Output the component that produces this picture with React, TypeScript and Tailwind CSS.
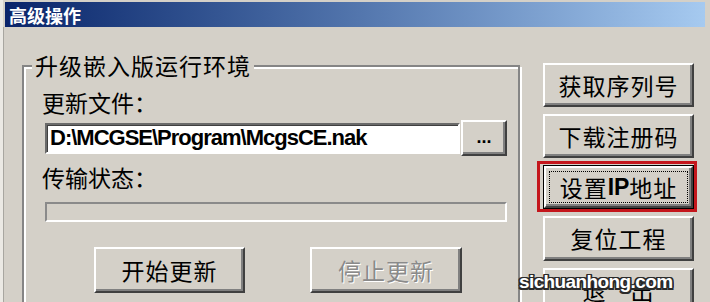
import React from "react";

const raised =
  "border-2 border-t-white border-l-white border-r-[#404040] border-b-[#404040] shadow-[inset_-2px_-2px_0_#808080] bg-[#d4d0c8]";

function Btn({
  children,
  className = "",
  disabled = false,
}: {
  children: React.ReactNode;
  className?: string;
  disabled?: boolean;
}) {
  return (
    <div
      className={`${raised} flex items-center justify-center text-[23px] leading-none tracking-[1px] ${
        disabled ? "text-[#8a8a8a] [text-shadow:1px_1px_0_#ffffff]" : "text-black"
      } ${className}`}
    >
      {children}
    </div>
  );
}

export default function App() {
  return (
    <div className="relative h-[302px] w-[710px] overflow-hidden bg-[#d4d0c8] font-['Noto_Sans_CJK_SC',sans-serif] text-black shadow-[inset_3px_0_0_#ebe9e4]">
      {/* title bar */}
      <div className="ml-[5px] mr-[5px] mt-[2px] flex h-[25px] items-center bg-linear-to-r from-[#0a246a] to-[#a6caf0] pl-[4px] text-[18px] font-bold leading-none text-white">
        高级操作
      </div>

      <div className="ml-[3px] flex border-l border-[#a8a6a0] pl-[18px]">
        {/* group box */}
        <div className="relative mt-[38px] h-[300px] w-[498px] border-2 border-[#858585] shadow-[inset_2px_2px_0_#ffffff,2px_2px_0_#ffffff]">
          <span className="absolute left-[8px] top-[-16px] bg-[#d4d0c8] px-[3px] text-[23px] leading-[28px] tracking-[1px]">
            升级嵌入版运行环境
          </span>
          <div className="flex flex-col pl-[18px] pt-[21px]">
            <div className="text-[23px] leading-[28px]">更新文件：</div>
            <div className="ml-[3px] mt-[4px] flex h-[36px] items-center">
              <div className="flex h-[31px] w-[415px] items-center border-2 border-t-[#6a6a6a] border-l-[#6a6a6a] border-r-white border-b-white bg-white pl-[3px] font-['Liberation_Sans',sans-serif] text-[22px] font-bold leading-none tracking-[-1px] shadow-[inset_1px_1px_0_#404040]">
                {"D:\\MCGSE\\Program\\McgsCE.nak"}
              </div>
              <div
                className={`${raised} ml-[1px] flex h-[36px] w-[46px] items-center justify-center pb-[2px] font-['Liberation_Sans',sans-serif] text-[18px] font-bold leading-none`}
              >
                ...
              </div>
            </div>
            <div className="mt-[7px] text-[23px] leading-[28px]">传输状态：</div>
            <div className="ml-[3px] mt-[11px] h-[20px] w-[462px] border-2 border-t-[#8a8a8a] border-l-[#8a8a8a] border-r-white border-b-white bg-[#d4d0c8]" />
            <div className="ml-[52px] mt-[25px] flex gap-[65px]">
              <Btn className="h-[46px] w-[151px]">开始更新</Btn>
              <Btn className="h-[46px] w-[152px]" disabled>
                停止更新
              </Btn>
            </div>
          </div>
        </div>

        {/* right column */}
        <div className="ml-[23px] mt-[36px] flex w-[151px] flex-col gap-[7px]">
          <Btn className="h-[44px]">获取序列号</Btn>
          <Btn className="h-[44px]">下载注册码</Btn>
          <div className="relative h-[44px]">
            <div className="h-full border border-black">
              <div className={`${raised} relative flex h-full items-center justify-center text-[23px] leading-none tracking-[1px]`}>
                <span>设置</span>
                <span className="font-['Liberation_Sans',sans-serif] font-bold tracking-[0px]">IP</span>
                <span>地址</span>
                <div className="absolute inset-[3px] border border-dotted border-black" />
              </div>
            </div>
            <div className="absolute bottom-[-3px] left-[-6px] right-[-3px] top-[-4px] border-[3px] border-[#c4161c]" />
          </div>
          <Btn className="h-[45px]">复位工程</Btn>
          <Btn className="h-[44px]">退　出</Btn>
        </div>
      </div>

      {/* watermark */}
      <div className="absolute left-[519px] top-[272px] font-['Liberation_Sans',sans-serif] text-[19px] font-bold leading-none tracking-[-0.6px] text-white [text-shadow:-1.5px_-1.5px_0_#2a2a2a,1.5px_-1.5px_0_#2a2a2a,-1.5px_1.5px_0_#2a2a2a,1.5px_1.5px_0_#2a2a2a,0_1.5px_0_#2a2a2a,0_-1.5px_0_#2a2a2a,1.5px_0_0_#2a2a2a,-1.5px_0_0_#2a2a2a]">
        sichuanhong.com
      </div>
    </div>
  );
}
